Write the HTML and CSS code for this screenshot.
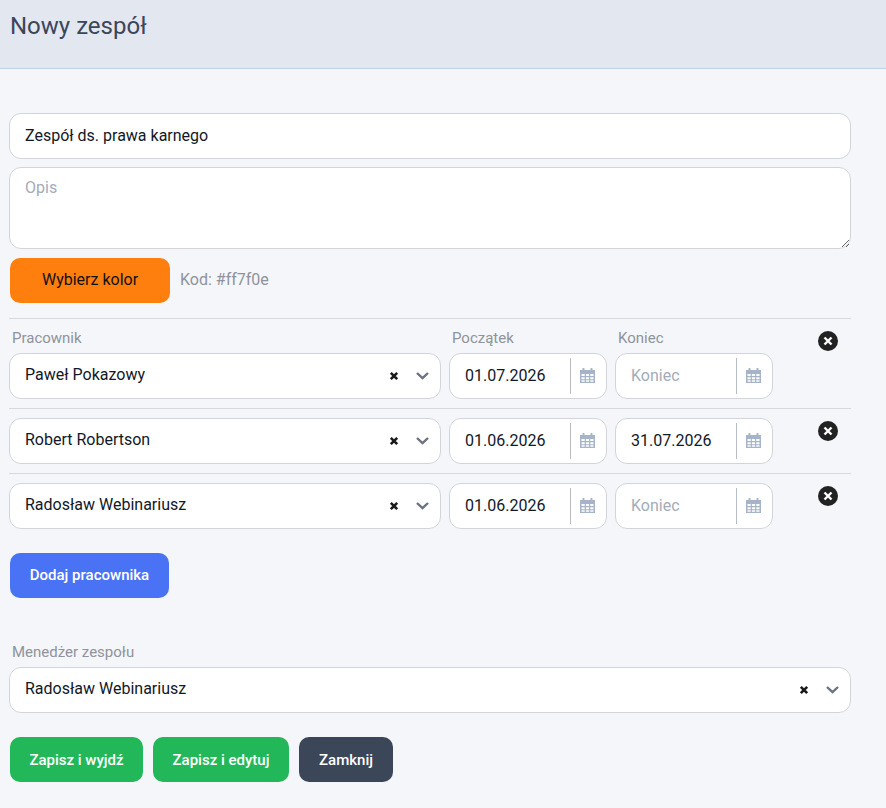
FILE: index.html
```html
<!DOCTYPE html>
<html lang="pl">
<head>
  <meta charset="UTF-8">
  <meta name="viewport" content="width=device-width, initial-scale=1.0">
  <title>Nowy zespół</title>
  <link rel="stylesheet" href="styles.css">
</head>
<body>
  <svg class="sprites" width="0" height="0" aria-hidden="true">
    <symbol id="cal" viewBox="0 0 15 15">
      <path fill="#a5b4c8" d="M0 2h2.5V.8a1 1 0 0 1 2 0V2h6V.8a1 1 0 0 1 2 0V2H15v13H0z"/>
      <path fill="#fff" d="M1.5 6h3.2v2h-3.2zM5.9 6h3.2v2H5.9zM10.3 6h3.2v2h-3.2zM1.5 9.2h3.2v2h-3.2zM5.9 9.2h3.2v2H5.9zM10.3 9.2h3.2v2h-3.2zM1.5 12.3h3.2v1.5h-3.2zM5.9 12.3h3.2v1.5H5.9zM10.3 12.3h3.2v1.5h-3.2z"/>
    </symbol>
    <symbol id="clear" viewBox="0 0 10 10">
      <path d="M1.8 1.8l6.4 6.4M8.2 1.8L1.8 8.2" stroke="#1a1a1a" stroke-width="2.6" fill="none"/>
    </symbol>
    <symbol id="chevron" viewBox="0 0 13 8">
      <path d="M1 1l5.5 5.2L12 1" stroke="#6b7280" stroke-width="2.4" fill="none"/>
    </symbol>
    <symbol id="remove" viewBox="0 0 20 20">
      <circle cx="10" cy="10" r="10" fill="#222"/>
      <path d="M6.5 6.5l7 7M13.5 6.5l-7 7" stroke="#fff" stroke-width="2.4" fill="none"/>
    </symbol>
  </svg>

  <header class="page-head">
    <h1>Nowy zespół</h1>
  </header>

  <form class="team-form">
    <input class="field" type="text" value="Zespół ds. prawa karnego">
    <textarea class="field area" placeholder="Opis"></textarea>

    <div class="color-row">
      <button type="button" class="btn btn-color">Wybierz kolor</button>
      <span class="color-code">Kod: #ff7f0e</span>
    </div>

    <div class="member">
      <div class="col-name">
        <label>Pracownik</label>
        <div class="field select">
          <span class="select-value">Paweł Pokazowy</span>
          <svg class="ico-clear"><use href="#clear"/></svg>
          <svg class="ico-chevron"><use href="#chevron"/></svg>
        </div>
      </div>
      <div class="col-date">
        <label>Początek</label>
        <div class="field date">
          <input type="text" value="01.07.2026" placeholder="Początek">
          <span class="date-btn"><svg class="ico-cal"><use href="#cal"/></svg></span>
        </div>
      </div>
      <div class="col-date">
        <label>Koniec</label>
        <div class="field date">
          <input type="text" placeholder="Koniec">
          <span class="date-btn"><svg class="ico-cal"><use href="#cal"/></svg></span>
        </div>
      </div>
      <svg class="ico-remove"><use href="#remove"/></svg>
    </div>

    <div class="member">
      <div class="col-name">
        <div class="field select">
          <span class="select-value">Robert Robertson</span>
          <svg class="ico-clear"><use href="#clear"/></svg>
          <svg class="ico-chevron"><use href="#chevron"/></svg>
        </div>
      </div>
      <div class="col-date">
        <div class="field date">
          <input type="text" value="01.06.2026" placeholder="Początek">
          <span class="date-btn"><svg class="ico-cal"><use href="#cal"/></svg></span>
        </div>
      </div>
      <div class="col-date">
        <div class="field date">
          <input type="text" value="31.07.2026" placeholder="Koniec">
          <span class="date-btn"><svg class="ico-cal"><use href="#cal"/></svg></span>
        </div>
      </div>
      <svg class="ico-remove"><use href="#remove"/></svg>
    </div>

    <div class="member">
      <div class="col-name">
        <div class="field select">
          <span class="select-value">Radosław Webinariusz</span>
          <svg class="ico-clear"><use href="#clear"/></svg>
          <svg class="ico-chevron"><use href="#chevron"/></svg>
        </div>
      </div>
      <div class="col-date">
        <div class="field date">
          <input type="text" value="01.06.2026" placeholder="Początek">
          <span class="date-btn"><svg class="ico-cal"><use href="#cal"/></svg></span>
        </div>
      </div>
      <div class="col-date">
        <div class="field date">
          <input type="text" placeholder="Koniec">
          <span class="date-btn"><svg class="ico-cal"><use href="#cal"/></svg></span>
        </div>
      </div>
      <svg class="ico-remove"><use href="#remove"/></svg>
    </div>

    <button type="button" class="btn btn-blue btn-add">Dodaj pracownika</button>

    <div class="manager">
      <label>Menedżer zespołu</label>
      <div class="field select">
        <span class="select-value">Radosław Webinariusz</span>
        <svg class="ico-clear"><use href="#clear"/></svg>
        <svg class="ico-chevron"><use href="#chevron"/></svg>
      </div>
    </div>

    <div class="actions">
      <button type="button" class="btn btn-green">Zapisz i wyjdź</button>
      <button type="button" class="btn btn-green">Zapisz i edytuj</button>
      <button type="button" class="btn btn-dark">Zamknij</button>
    </div>
  </form>
</body>
</html>
```

FILE: styles.css
```css
* {
  box-sizing: border-box;
}
body {
  margin: 0;
  background-color: #f4f6fa;
  font-family: Roboto, "Liberation Sans", sans-serif;
  font-size: 16px;
  color: #111827;
}
.sprites {
  position: absolute;
}
.page-head {
  height: 69px;
  padding: 11px 10px 0;
  background-color: #e2e7f0;
  border-bottom: 1px solid #c3d0ea;
}
.page-head h1 {
  margin: 0;
  font-size: 24px;
  line-height: 30px;
  font-weight: 400;
  color: #3b4659;
}
.team-form {
  padding: 44px 35px 0 9px;
}
.field {
  display: block;
  width: 100%;
  height: 46px;
  background: #fff;
  border: 1px solid #d1d5db;
  border-radius: 12px;
  font: inherit;
  color: #111827;
}
input.field {
  padding: 0 15px 2px;
  outline: none;
}
.area {
  height: 82px;
  margin-top: 8px;
  padding: 10px 15px;
  outline: none;
  resize: vertical;
}
::placeholder {
  color: #a3acb9;
  opacity: 1;
}
.color-row {
  display: flex;
  align-items: center;
  gap: 10px;
  margin: 9px 0 15px 1px;
}
.color-code {
  padding-bottom: 2px;
  color: #8f939b;
}
.btn {
  height: 45px;
  border: none;
  border-radius: 10px;
  font-family: inherit;
  font-size: 15px;
  font-weight: 500;
  color: #fff;
}
.btn-color {
  width: 160px;
  padding-bottom: 3px;
  background-color: #ff7f0e;
  color: #111;
  font-size: 16px;
  font-weight: 400;
}
.btn-blue {
  background-color: #4a72f5;
}
.btn-green {
  background-color: #22b85a;
}
.btn-dark {
  width: 94px;
  background-color: #3b4659;
}
.member {
  display: flex;
  gap: 8px;
  padding: 9px 0;
  border-top: 1px solid #d5d8de;
}
.member label,
.manager label {
  display: block;
  height: 25px;
  padding-left: 3px;
  font-size: 15px;
  line-height: 20px;
  color: #8f939b;
}
.col-name {
  width: 432px;
}
.col-date {
  width: 158px;
}
.select {
  display: flex;
  align-items: center;
  padding: 0 11px 0 15px;
}
.select-value {
  flex: 1;
  position: relative;
  top: -2px;
}
.ico-clear {
  width: 10px;
  height: 10px;
  margin-right: 17px;
}
.ico-chevron {
  width: 13px;
  height: 8px;
}
.date {
  display: flex;
  align-items: center;
}
.date input {
  flex: 1;
  min-width: 0;
  height: 100%;
  padding: 0 0 2px 15px;
  border: none;
  outline: none;
  background: transparent;
  border-radius: 12px;
  font: inherit;
  color: #111827;
}
.date-btn {
  display: flex;
  align-items: center;
  justify-content: center;
  width: 36px;
  height: 36px;
  padding: 0 2px 2px 0;
  border-left: 1px solid #b8bcc4;
}
.ico-cal {
  width: 15px;
  height: 15px;
}
.ico-remove {
  flex: none;
  width: 20px;
  height: 20px;
  margin: 3px 0 0 37px;
}
.btn-add {
  display: block;
  width: 159px;
  margin: 15px 0 0 1px;
  padding-bottom: 2px;
}
.manager {
  width: 842px;
  margin-top: 45px;
}
.manager label {
  height: 24px;
  line-height: 18px;
}
.actions {
  display: flex;
  gap: 10px;
  margin: 24px 0 0 1px;
}
.actions .btn-green:first-child {
  width: 133px;
}
.actions .btn-green:nth-child(2) {
  width: 136px;
}
```
